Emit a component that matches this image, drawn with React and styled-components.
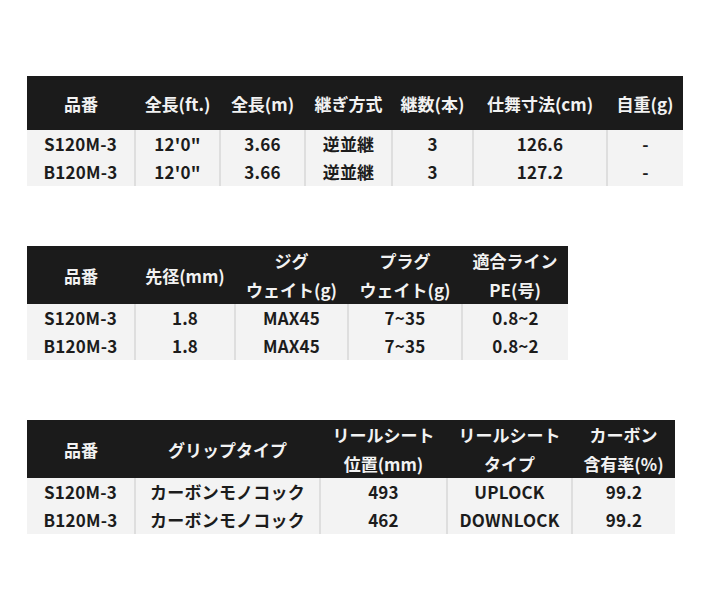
import React from "react"
import styled, { createGlobalStyle } from "styled-components"

const GlobalStyle = createGlobalStyle`
  body {
    margin: 0;
    background: #ffffff;
    font-family: "Noto Sans CJK JP", "Noto Sans", sans-serif;
  }
`

const Page = styled.div`
  display: flex;
  flex-direction: column;
  gap: 60px;
  padding: 76px 0 0 27px;
`

const Table = styled.table`
  width: ${props => props.$width}px;
  table-layout: fixed;
  border-collapse: collapse;
  font-size: 17px;
  font-weight: 700;
`

const Col = styled.col`
  width: ${props => props.$w}px;
`

const HeadCell = styled.th`
  background: #1b1b1b;
  color: #f2f2f2;
  height: ${props => props.$h || 54}px;
  padding: 0;
  line-height: 29px;
  text-align: center;
  vertical-align: middle;
  font-weight: 700;
  white-space: nowrap;
`

const Cell = styled.td`
  background: #f3f3f3;
  color: #1c1c1c;
  height: 28px;
  padding: 0;
  line-height: 28px;
  text-align: center;
  vertical-align: middle;
  white-space: nowrap;
  letter-spacing: 0.2px;
  & + & {
    border-left: 2px solid #dedede;
  }
`

const SpecTable = ({ widths, head, rows, headHeight }) => (
  <Table $width={widths.reduce((a, b) => a + b, 0)}>
    <colgroup>
      {widths.map((w, i) => (
        <Col key={i} $w={w} />
      ))}
    </colgroup>
    <thead>
      <tr>
        {head.map((h, i) => (
          <HeadCell key={i} $h={headHeight}>
            {h.split("\n").map((line, j) => (
              <div key={j}>{line}</div>
            ))}
          </HeadCell>
        ))}
      </tr>
    </thead>
    <tbody>
      {rows.map((r, i) => (
        <tr key={i}>
          {r.map((c, j) => (
            <Cell key={j}>{c}</Cell>
          ))}
        </tr>
      ))}
    </tbody>
  </Table>
)

const App = () => (
  <>
    <GlobalStyle />
    <Page>
      <SpecTable
        widths={[108, 85, 85, 87, 81, 134, 76]}
        head={["品番", "全長(ft.)", "全長(m)", "継ぎ方式", "継数(本)", "仕舞寸法(cm)", "自重(g)"]}
        rows={[
          ["S120M-3", "12'0\"", "3.66", "逆並継", "3", "126.6", "-"],
          ["B120M-3", "12'0\"", "3.66", "逆並継", "3", "127.2", "-"],
        ]}
      />
      <SpecTable
        widths={[108, 100, 113, 114, 106]}
        headHeight={55}
        head={["品番", "先径(mm)", "ジグ\nウェイト(g)", "プラグ\nウェイト(g)", "適合ライン\nPE(号)"]}
        rows={[
          ["S120M-3", "1.8", "MAX45", "7~35", "0.8~2"],
          ["B120M-3", "1.8", "MAX45", "7~35", "0.8~2"],
        ]}
      />
      <SpecTable
        widths={[108, 185, 127, 125, 103]}
        headHeight={55}
        head={["品番", "グリップタイプ", "リールシート\n位置(mm)", "リールシート\nタイプ", "カーボン\n含有率(%)"]}
        rows={[
          ["S120M-3", "カーボンモノコック", "493", "UPLOCK", "99.2"],
          ["B120M-3", "カーボンモノコック", "462", "DOWNLOCK", "99.2"],
        ]}
      />
    </Page>
  </>
)

export default App
